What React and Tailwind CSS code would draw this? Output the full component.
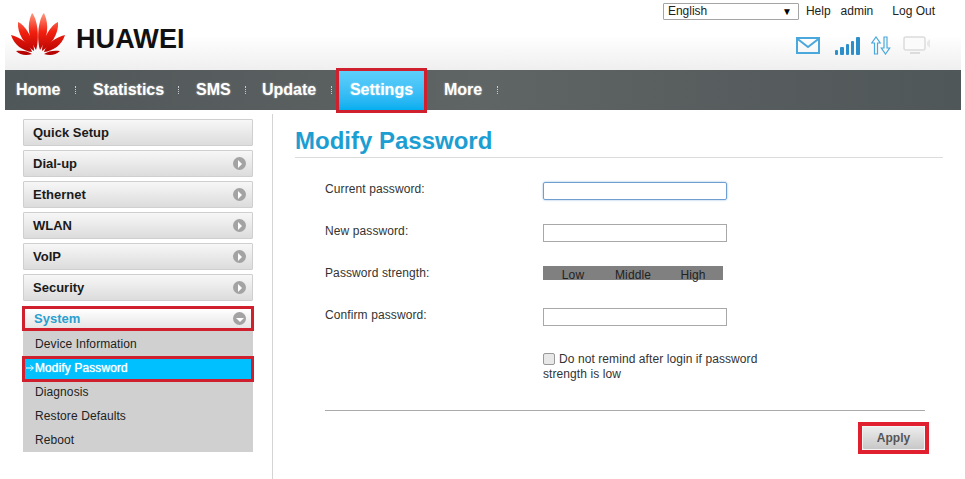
import React from 'react';

const navItems = [
  { label: 'Home', w: 'w-[77px]', mr: 'mr-[17px]' },
  { label: 'Statistics', w: 'w-[103px]', mr: 'mr-[17px]' },
  { label: 'SMS', w: 'w-[66px]', mr: 'mr-[16px]' },
  { label: 'Update', w: 'w-[75px]', mr: 'mr-[5px]' },
];

const sideItems = ['Dial-up', 'Ethernet', 'WLAN', 'VoIP', 'Security'];
const subItems = ['Device Information', 'Modify Password', 'Diagnosis', 'Restore Defaults', 'Reboot'];

const Petals = () => (
  <>
    <path d="M25 37C18 27 15 12 21 0C26 5 29 24 25 37Z" />
    <path d="M23 38C14 32 6 21 7 9C14 12 23 26 23 38Z" />
    <path d="M21 39C12 38 3 32 0 22C9 24 19 31 21 39Z" />
    <path d="M21 41C15 43 9 42 5 38C11 37 17 38 21 41Z" />
  </>
);

const Logo = () => (
  <svg width="54" height="42" viewBox="0 0 54 42" className="shrink-0">
    <defs>
      <linearGradient id="petal" gradientUnits="userSpaceOnUse" x1="0" y1="0" x2="0" y2="42">
        <stop offset="0" stopColor="#ff9a80" />
        <stop offset="0.45" stopColor="#f2200f" />
        <stop offset="1" stopColor="#b00000" />
      </linearGradient>
    </defs>
    <g fill="url(#petal)">
      <Petals />
      <g transform="translate(54 0) scale(-1 1)">
        <Petals />
      </g>
    </g>
  </svg>
);

const MailIcon = () => (
  <svg width="24" height="17" viewBox="0 0 24 17" fill="none" stroke="#4aa8dc" strokeWidth="2">
    <rect x="1" y="1" width="22" height="15" />
    <path d="M1 1.500 12 10 23 1.500" />
  </svg>
);

const SignalIcon = () => (
  <svg width="25" height="18" viewBox="0 0 25 18" fill="#2d8fc9">
    <rect x="0" y="13" width="3" height="5" rx="1" />
    <rect x="5" y="10" width="4" height="8" rx="1" />
    <rect x="11" y="7" width="3" height="11" rx="1" />
    <rect x="16" y="4" width="3" height="14" rx="1" />
    <rect x="21" y="0" width="4" height="18" rx="1" />
  </svg>
);

const ArrowsIcon = () => (
  <svg width="20" height="19" viewBox="0 0 20 19" fill="none" stroke="#4aa8dc" strokeWidth="1.2">
    <path d="M3.500 18V7H0.800L5 1 9.200 7H6.500V18Z" />
    <path d="M13 1V12H10.300L14.500 18 18.700 12H16V1Z" />
  </svg>
);

const MonitorIcon = () => (
  <svg width="30" height="19" viewBox="0 0 30 19" fill="none">
    <rect x="1" y="1" width="21" height="13" rx="2" fill="#fbfbfb" stroke="#dcdcdc" strokeWidth="1.500" />
    <path d="M7 17H17" stroke="#dcdcdc" strokeWidth="2" />
    <path d="M24 6 27 3V12L24 9Z" fill="#e8e8e8" />
  </svg>
);

const Dots = () => <span className="block h-[8px] w-px border-l border-dotted border-[#c8cccc]" />;

const Circle = ({ open }) => (
  <span className="flex h-[13px] w-[13px] items-center justify-center rounded-full bg-[#a3a3a3]">
    {open ? (
      <span className="mt-[2px] border-x-[4px] border-t-[4px] border-x-transparent border-t-white" />
    ) : (
      <span className="ml-[1px] border-y-[4px] border-l-[4px] border-y-transparent border-l-white" />
    )}
  </span>
);

const SideItem = ({ label, arrow = true }) => (
  <div className="flex h-[27px] items-center justify-between rounded-[1px] border border-[#cfcfcf] bg-gradient-to-b from-[#f7f7f7] to-[#dcdcdc] pl-[9px] pr-[6px] text-[13px] font-bold text-[#1a1a1a]">
    {label}
    {arrow && <Circle />}
  </div>
);

const FormRow = ({ label, children }) => (
  <div className="flex h-[42px] items-center text-[12px] tracking-[0.1px] text-[#333]">
    <span className="-mt-[4px] w-[218px]">{label}</span>
    {children}
  </div>
);

export default function App() {
  return (
    <div className="h-[479px] w-[965px] overflow-hidden bg-white font-['Liberation_Sans',Arial,sans-serif]">
      <header className="ml-[5px] flex h-[70px] w-[956px] justify-between bg-gradient-to-b from-white from-50% to-[#efefef]">
        <div className="flex items-start pl-[6px] pt-[13px]">
          <Logo />
          <span className="ml-[11px] mt-[11px] text-[27px] font-bold leading-[30px] tracking-[0.1px] text-[#111]">HUAWEI</span>
        </div>
        <div className="flex flex-col items-end pr-[24px] pt-[2px]">
          <div className="flex items-center text-[12px] text-[#222]">
            <div className="mr-[7px] flex h-[17px] w-[136px] items-center justify-between rounded-[1px] border border-[#a5a5a5] bg-white pl-[4px] pr-[6px]">
              English
              <span className="text-[10px] text-black">▼</span>
            </div>
            <span className="mr-[10px]">Help</span>
            <span className="mr-[19px]">admin</span>
            <span className="mr-[2px]">Log Out</span>
          </div>
          <div className="mr-[4px] mt-[16px] flex items-center">
            <MailIcon />
            <span className="ml-[15px]"><SignalIcon /></span>
            <span className="ml-[11px]"><ArrowsIcon /></span>
            <span className="ml-[12px]"><MonitorIcon /></span>
          </div>
        </div>
      </header>

      <nav className="ml-[5px] flex h-[40px] w-[956px] items-center bg-gradient-to-r from-[#505758] via-[#5f6464] to-[#505758] pl-[11px] text-[16px] font-bold text-white [text-shadow:0_0_2px_rgba(255,255,255,0.5)]">
        {navItems.map((item) => (
          <div key={item.label} className={`flex items-center ${item.w}`}>
            <span className="flex-1">{item.label}</span>
            <span className={item.mr}><Dots /></span>
          </div>
        ))}
        <div className="-my-[2px] -ml-[1px] flex h-[45px] w-[91px] items-center justify-center border-[3px] border-[#d0202e] bg-gradient-to-b from-[#5ed0fb] to-[#00aff0]">
          Settings
        </div>
        <span className="ml-[17px] w-[53px]">More</span>
        <Dots />
      </nav>

      <main className="flex pl-[23px]">
        <aside className="w-[230px] pt-[9px]">
          <div className="flex flex-col gap-[4px]">
            <SideItem label="Quick Setup" arrow={false} />
            {sideItems.map((label) => (
              <SideItem key={label} label={label} />
            ))}
          </div>
          <div className="-mx-[1px] mt-[5px] flex h-[25px] items-center justify-between border-[3px] border-[#d0202e] bg-gradient-to-b from-white to-[#e6e6e6] pl-[9px] pr-[5px] text-[13px] font-bold text-[#2a9fd0]">
            System
            <Circle open />
          </div>
          <div className="flex h-[121px] flex-col bg-[#d0d0d0] pt-[1px] text-[12px] tracking-[0.1px] text-[#222]">
            {subItems.map((label) =>
              label === 'Modify Password' ? (
                <div key={label} className="-mx-[1px] -mb-[1px] flex h-[26px] items-center border-[3px] border-[#d0202e] bg-[#00c0ff] pb-[2px] text-white [text-shadow:0_0_1px_white]">
                  <svg width="10" height="8" viewBox="0 0 10 8" fill="none" stroke="white" strokeWidth="1" className="shrink-0">
                    <path d="M1 4H8M5.500 1.500 8.500 4 5.500 6.500" />
                  </svg>
                  {label}
                </div>
              ) : (
                <div key={label} className={`flex h-[24px] items-center pl-[12px] ${label === 'Diagnosis' ? 'pb-[2px]' : ''}`}>{label}</div>
              )
            )}
          </div>
        </aside>

        <div className="ml-[19px] mt-[4px] h-[365px] w-px bg-[#d4d4d4]" />

        <section className="ml-[22px] w-[648px] pt-[17px]">
          <h1 className="h-[31px] border-b border-[#dcdcdc] text-[24px] font-bold leading-[28px] text-[#1c9ed2]">Modify Password</h1>
          <div className="w-[600px] pl-[30px] pt-[12px]">
            <FormRow label="Current password:">
              <div className="h-[18px] w-[184px] rounded-[2px] border border-[#6f9fd0] shadow-[0_0_2px_#7eaedc]" />
            </FormRow>
            <FormRow label="New password:">
              <div className="h-[18px] w-[184px] border border-[#a8a8a8]" />
            </FormRow>
            <FormRow label="Password strength:">
              <div className="-mt-[4px] grid h-[14px] w-[180px] grid-cols-3 items-center bg-[#808080] pb-[2px] text-center text-[#222]">
                <span>Low</span>
                <span>Middle</span>
                <span>High</span>
              </div>
            </FormRow>
            <FormRow label="Confirm password:">
              <div className="h-[18px] w-[184px] border border-[#a8a8a8]" />
            </FormRow>
            <div className="ml-[218px] mt-[14px] w-[225px] text-[12px] leading-[15px] tracking-[0.08px] text-[#333]">
              <span className="mr-[4px] inline-block h-[12px] w-[12px] rounded-[2px] border border-[#999] bg-[#e8e8e8] align-[-2px]" />
              Do not remind after login if password strength is low
            </div>
          </div>
          <div className="ml-[30px] mt-[28px] w-[600px] border-t border-[#aaaaaa]" />
          <div className="ml-[30px] mt-[11px] flex w-[604px] justify-end">
            <div className="h-[32px] w-[71px] border-[4px] border-[#e0202e]">
              <div className="flex h-full items-center justify-center rounded-[2px] border border-[#f4f4f4] bg-gradient-to-b from-[#ececec] to-[#c8c8c8] text-[12px] font-bold text-[#555]">
                Apply
              </div>
            </div>
          </div>
        </section>
      </main>
    </div>
  );
}
